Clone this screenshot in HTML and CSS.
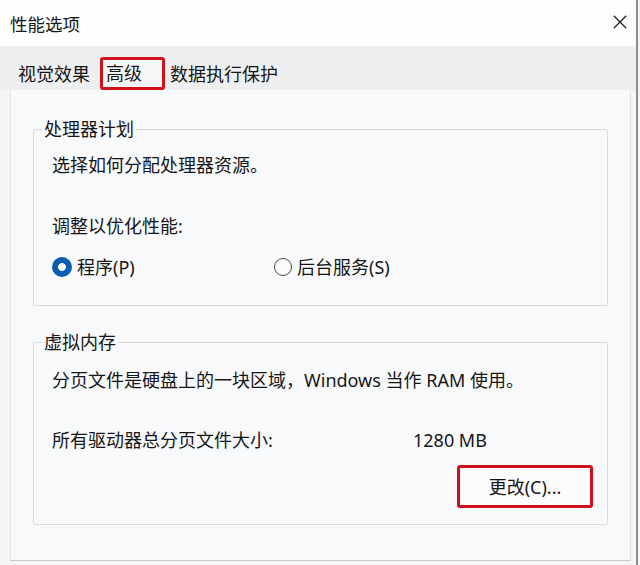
FILE: index.html
```html
<!DOCTYPE html>
<html lang="zh-CN">
<head>
<meta charset="utf-8">
<title>性能选项</title>
<link rel="stylesheet" href="styles.css">
</head>
<body>
<div class="window">
  <header class="titlebar">
    <span class="title">性能选项</span>
    <svg class="close" width="14" height="14" viewBox="0 0 14 14" aria-label="关闭"><path d="M0.8 0.8L13.2 13.2M13.2 0.8L0.8 13.2" stroke="#1f1f1f" stroke-width="1.3" fill="none"/></svg>
  </header>
  <nav class="tabs">
    <span class="tab">视觉效果</span>
    <span class="tab active">高级</span>
    <span class="tab">数据执行保护</span>
  </nav>
  <main class="panel">
    <fieldset class="group group-cpu">
      <legend>处理器计划</legend>
      <p class="line l1">选择如何分配处理器资源。</p>
      <p class="line l2">调整以优化性能:</p>
      <div class="radios">
        <label class="radio"><span class="dot on"></span>程序(P)</label>
        <label class="radio"><span class="dot"></span>后台服务(S)</label>
      </div>
    </fieldset>
    <fieldset class="group group-mem">
      <legend>虚拟内存</legend>
      <p class="line m1">分页文件是硬盘上的一块区域，Windows 当作 RAM 使用。</p>
      <div class="size"><span>所有驱动器总分页文件大小:</span><span>1280 MB</span></div>
      <div class="actions"><button class="btn">更改(C)...</button></div>
    </fieldset>
  </main>
</div>
</body>
</html>
```

FILE: styles.css
```css
html, body {
  margin: 0;
  padding: 0;
}
body {
  width: 640px;
  height: 565px;
  overflow: hidden;
  background: #f4f5f7;
  font-family: "Noto Sans", "Noto Sans CJK SC", sans-serif;
  color: #161616;
}
.window {
  width: 636px;
  height: 565px;
  border-right: 2px solid #8d8d8f;
  display: flex;
  flex-direction: column;
}
.titlebar {
  height: 46px;
  flex: none;
  background: #fdfdfe;
  display: flex;
  align-items: center;
  justify-content: space-between;
  padding: 0 9px 0 10px;
  box-sizing: border-box;
}
.title {
  font-size: 17.5px;
  line-height: 1;
  padding-top: 3px;
}
.close {
  display: block;
  margin-top: -2px;
}
.tabs {
  height: 44px;
  flex: none;
  background: #eeeff1;
  display: flex;
  align-items: flex-end;
  padding-left: 18px;
  box-sizing: border-box;
}
.tab {
  font-size: 18px;
  line-height: 35px;
  height: 33px;
  box-sizing: border-box;
  white-space: nowrap;
}
.tab.active {
  border: 3px solid #cf111b;
  border-radius: 3px;
  line-height: 25px;
  padding: 1px 20px 0 3px;
  margin: 0 5px 0 10px;
  background: #f5f6f8;
}
.panel {
  margin-left: 10px;
  width: 621px;
  height: 471px;
  box-sizing: border-box;
  background: #f8f9fb;
  border-left: 1px solid #e2e3e5;
  border-right: 1px solid #e2e3e5;
  border-bottom: 1px solid #c8c9cb;
  padding: 27px 0 0 22px;
}
.group {
  margin: 0;
  width: 575px;
  box-sizing: border-box;
  min-width: 0;
  border: 1px solid #dadbde;
  border-radius: 2px;
  padding: 0 14px 0 18px;
}
.group legend {
  font-size: 18px;
  line-height: 24px;
  padding: 0 2px;
  margin-left: -10px;
}
.line {
  margin: 0;
  font-size: 18px;
  line-height: 24px;
  white-space: nowrap;
}
.group-cpu {
  padding-bottom: 26px;
}
.l1 { margin-top: 12px; }
.l2 { margin-top: 37px; }
.radios {
  margin-top: 17px;
  display: grid;
  grid-template-columns: 222px auto;
  align-items: center;
  height: 24px;
}
.radio {
  display: flex;
  align-items: center;
  gap: 5px;
  font-size: 18px;
  line-height: 24px;
  white-space: nowrap;
}
.dot {
  width: 18px;
  height: 18px;
  border-radius: 50%;
  box-sizing: border-box;
  border: 1px solid #4a4a4c;
  background: #fafbfc;
  flex: none;
}
.dot.on {
  width: 20px;
  height: 20px;
  border: none;
  background: radial-gradient(circle, #ffffff 0 3.6px, #0a5db3 4.3px);
}
.group-mem {
  margin-top: 24px;
  padding-bottom: 16px;
}
.m1 { margin-top: 14px; }
.size {
  margin-top: 36px;
  display: grid;
  grid-template-columns: 361px auto;
  font-size: 18px;
  line-height: 24px;
  white-space: nowrap;
}
.actions {
  margin-top: 13px;
  display: flex;
  justify-content: flex-end;
}
.btn {
  width: 136px;
  height: 43px;
  box-sizing: border-box;
  border: 3px solid #cf111b;
  border-radius: 3px;
  background: #fcfcfd;
  font-family: inherit;
  font-size: 18px;
  color: #161616;
  padding: 0;
  line-height: 1;
}
```
